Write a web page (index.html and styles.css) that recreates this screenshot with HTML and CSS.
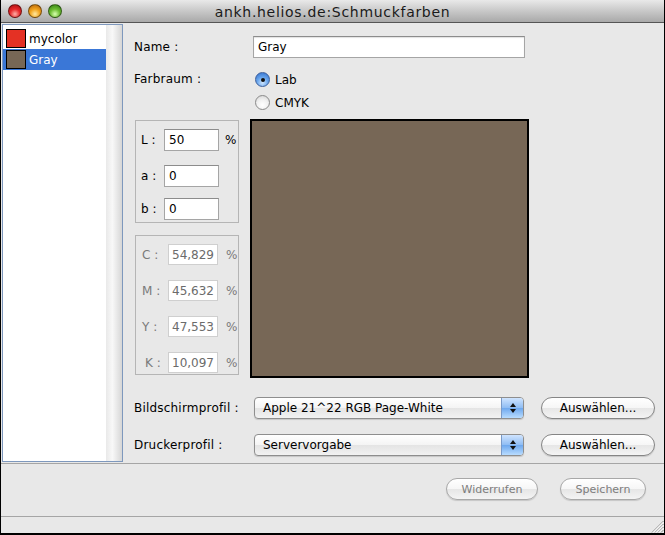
FILE: index.html
```html
<!DOCTYPE html>
<html>
<head>
<meta charset="utf-8">
<link rel="stylesheet" href="styles.css">
</head>
<body>
<div class="window">
  <div class="titlebar">
    <div class="lights">
      <span class="light red"></span>
      <span class="light yellow"></span>
      <span class="light green"></span>
    </div>
    <div class="title">ankh.helios.de:Schmuckfarben</div>
  </div>
  <div class="main">
    <div class="sidebar">
      <div class="list">
        <div class="item"><span class="swatch swatch-red"></span><span>mycolor</span></div>
        <div class="item selected"><span class="swatch swatch-gray"></span><span>Gray</span></div>
      </div>
      <div class="track"></div>
    </div>
    <div class="form">
      <div class="row name-row">
        <div class="label">Name :</div>
        <div class="textfield name-field">Gray</div>
      </div>
      <div class="row space-row">
        <div class="label">Farbraum :</div>
        <div class="radios">
          <div class="radio-line"><span class="radio on"></span>Lab</div>
          <div class="radio-line"><span class="radio"></span>CMYK</div>
        </div>
      </div>
      <div class="middle">
        <div class="boxes">
          <div class="box lab-box">
            <div class="val-row r-l"><span class="vlabel">L :</span><span class="vfield">50</span><span class="pct">%</span></div>
            <div class="val-row r-a"><span class="vlabel">a :</span><span class="vfield">0</span><span class="pct"></span></div>
            <div class="val-row r-b"><span class="vlabel">b :</span><span class="vfield">0</span><span class="pct"></span></div>
          </div>
          <div class="box cmyk-box">
            <div class="cval-row"><span class="clabel">C :</span><span class="cfield">54,829</span><span class="cpct">%</span></div>
            <div class="cval-row"><span class="clabel">M :</span><span class="cfield">45,632</span><span class="cpct">%</span></div>
            <div class="cval-row"><span class="clabel">Y :</span><span class="cfield">47,553</span><span class="cpct">%</span></div>
            <div class="cval-row k-row"><span class="clabel">K :</span><span class="cfield">10,097</span><span class="cpct">%</span></div>
          </div>
        </div>
        <div class="preview"></div>
      </div>
      <div class="row profile-row first">
        <div class="label">Bildschirmprofil :</div>
        <div class="select"><span class="select-text">Apple 21^22 RGB Page-White</span><span class="select-arrows"><i class="up"></i><i class="down"></i></span></div>
        <div class="button">Auswählen...</div>
      </div>
      <div class="row profile-row">
        <div class="label">Druckerprofil :</div>
        <div class="select"><span class="select-text">Servervorgabe</span><span class="select-arrows"><i class="up"></i><i class="down"></i></span></div>
        <div class="button">Auswählen...</div>
      </div>
    </div>
  </div>
  <div class="footer">
    <div class="button disabled undo">Widerrufen</div>
    <div class="button disabled save">Speichern</div>
  </div>
  <div class="statusbar">
    <svg class="grip" width="14" height="14" viewBox="0 0 14 14">
      <g stroke="#8a8a8a" stroke-width="1">
        <line x1="13.5" y1="2" x2="2" y2="13.5"/>
        <line x1="13.5" y1="5" x2="5" y2="13.5"/>
        <line x1="13.5" y1="8" x2="8" y2="13.5"/>
        <line x1="13.5" y1="11" x2="11" y2="13.5"/>
      </g>
      <g stroke="#ffffff" stroke-width="1">
        <line x1="13.5" y1="3" x2="3" y2="13.5"/>
        <line x1="13.5" y1="6" x2="6" y2="13.5"/>
        <line x1="13.5" y1="9" x2="9" y2="13.5"/>
      </g>
    </svg>
  </div>
</div>
</body>
</html>
```

FILE: styles.css
```css
* { box-sizing: border-box; }
html, body { margin: 0; padding: 0; }
body {
  width: 665px;
  height: 535px;
  font-family: "DejaVu Sans", "Liberation Sans", sans-serif;
  font-size: 12px;
  color: #000;
  background: #e8e8e8;
}
.window {
  width: 665px;
  height: 535px;
  border: 1px solid #000;
  border-top: none;
  background: #e8e8e8;
  display: flex;
  flex-direction: column;
}
.titlebar {
  height: 23px;
  flex: none;
  background: linear-gradient(#e9e9e9, #c8c8c8 50%, #a9a9a9);
  border-bottom: 1px solid #555;
  position: relative;
  display: flex;
  align-items: center;
  justify-content: center;
}
.lights {
  position: absolute;
  left: 7px;
  top: 4px;
  display: flex;
  gap: 6px;
}
.light {
  width: 14px;
  height: 14px;
  border-radius: 50%;
  border: 1px solid rgba(0,0,0,0.45);
}
.light.red { background: radial-gradient(circle at 50% 75%, #ffb0a8 0%, #e8292a 45%, #a50d0d 100%); }
.light.yellow { background: radial-gradient(circle at 50% 75%, #ffe9a0 0%, #f2a41d 45%, #b05e06 100%); }
.light.green { background: radial-gradient(circle at 50% 75%, #d8ffb0 0%, #6dbd33 45%, #2f7a10 100%); }
.title {
  font-size: 14px;
  letter-spacing: 0.7px;
  color: #1a1a1a;
  padding-top: 1px;
}
.main {
  height: 440px;
  flex: none;
  display: flex;
}
.sidebar {
  width: 121px;
  margin: 1px 0 1px 1px;
  border: 1px solid #7e98bd;
  background: #fff;
  display: flex;
}
.list {
  flex: 1;
  padding-top: 3px;
}
.track {
  width: 16px;
  background: linear-gradient(90deg, #e9e9e9, #f8f8f8 40%, #d6d6d6);
}
.item {
  height: 21px;
  display: flex;
  align-items: center;
  gap: 3px;
  padding-left: 3px;
  font-size: 12px;
}
.item.selected {
  background: #3a77d7;
  color: #fff;
}
.swatch {
  width: 20px;
  height: 19px;
  border: 1px solid #000;
}
.swatch-red { background: #e43124; }
.swatch-gray { background: #776756; }
.form {
  flex: 1;
  padding-left: 11px;
  padding-top: 13px;
}
.row {
  display: flex;
  align-items: center;
}
.label {
  width: 119px;
  flex: none;
  letter-spacing: 0.2px;
}
.textfield {
  background: #fff;
  border: 1px solid #a5a5a5;
  border-top-color: #8c8c8c;
  box-shadow: inset 0 1px 1px rgba(0,0,0,0.12);
  height: 22px;
  padding: 3px 4px;
}
.name-field { width: 272px; }
.space-row {
  margin-top: 14px;
  align-items: flex-start;
}
.space-row .label { padding-top: 0; }
.radios {
  display: flex;
  flex-direction: column;
  gap: 8px;
  padding-left: 2px;
}
.radio-line {
  display: flex;
  align-items: center;
  gap: 5px;
  height: 15px;
}
.radio {
  width: 15px;
  height: 15px;
  border-radius: 50%;
  border: 1px solid #8a8a8a;
  background: radial-gradient(circle at 50% 70%, #ffffff 0%, #f0f0f0 50%, #d0d0d0 100%);
  position: relative;
}
.radio.on {
  border-color: #3c5f9c;
  background: radial-gradient(circle at 50% 75%, #cfe6ff 0%, #6aa6ec 45%, #2c6ccc 100%);
}
.radio.on::after {
  content: "";
  position: absolute;
  left: 4.5px;
  top: 4.5px;
  width: 4px;
  height: 4px;
  border-radius: 50%;
  background: #111;
}
.middle {
  display: flex;
  margin-top: 9px;
}
.boxes {
  width: 116px;
  flex: none;
  padding-left: 1px;
  padding-top: 1px;
  display: flex;
  flex-direction: column;
  gap: 12px;
}
.box {
  width: 104px;
  border: 1px solid #b5b5b5;
}
.lab-box {
  height: 103px;
  padding-top: 8px;
}
.val-row {
  display: flex;
  align-items: center;
  height: 22px;
}
.r-a { margin-top: 14px; }
.r-b { margin-top: 11px; }
.vlabel {
  width: 28px;
  padding-left: 5px;
}
.vfield {
  width: 55px;
  height: 22px;
  background: #fff;
  border: 1px solid #a5a5a5;
  border-top-color: #8c8c8c;
  padding: 3px 4px;
}
.pct { padding-left: 6px; }
.cmyk-box {
  height: 140px;
  padding-top: 8px;
  color: #7a7a7a;
}
.cval-row {
  display: flex;
  align-items: center;
  height: 21px;
  margin-bottom: 15px;
}
.cval-row.k-row { margin-bottom: 0; }
.clabel {
  width: 32px;
  padding-left: 6px;
}
.k-row .clabel { padding-left: 9px; }
.cfield {
  width: 50px;
  height: 21px;
  background: #fff;
  border: 1px solid #cfcfcf;
  padding: 3px 3px;
  color: #6b6b6b;
}
.cpct { padding-left: 8px; }
.preview {
  width: 279px;
  height: 259px;
  border: 2px solid #000;
  background: #776756;
}
.profile-row .label { width: 120px; }
.profile-row.first { margin-top: 19px; }
.profile-row + .profile-row { margin-top: 15px; }
.select {
  width: 270px;
  height: 22px;
  border: 1px solid #8e8e8e;
  border-radius: 4px;
  background: linear-gradient(#ffffff, #f4f4f4 50%, #e4e4e4 51%, #f2f2f2);
  display: flex;
  overflow: hidden;
  box-shadow: 0 1px 1px rgba(0,0,0,0.15);
}
.select-text {
  flex: 1;
  padding: 3px 0 0 8px;
}
.select-arrows {
  width: 22px;
  background: linear-gradient(#cfe4ff, #8ebcf3 50%, #6ea8ee 51%, #b8dcff);
  border-left: 1px solid #7a9ac8;
  display: flex;
  flex-direction: column;
  align-items: center;
  justify-content: center;
  gap: 2px;
}
.select-arrows i {
  width: 0;
  height: 0;
  border-left: 3px solid transparent;
  border-right: 3px solid transparent;
}
.select-arrows .up { border-bottom: 4px solid #111; }
.select-arrows .down { border-top: 4px solid #111; }
.button {
  height: 22px;
  border: 1px solid #858585;
  border-radius: 11px;
  background: linear-gradient(#ffffff, #f6f6f6 50%, #e6e6e6 51%, #f4f4f4);
  display: flex;
  align-items: center;
  justify-content: center;
  box-shadow: 0 1px 1px rgba(0,0,0,0.15);
}
.profile-row .button {
  width: 114px;
  margin-left: 17px;
}
.footer {
  height: 53px;
  flex: none;
  border-top: 1px solid #a5a5a5;
  display: flex;
  align-items: center;
  justify-content: flex-end;
  padding-right: 18px;
  padding-bottom: 2px;
  gap: 22px;
}
.button.disabled {
  color: #7d7d7d;
  font-size: 11px;
  border-color: #a8a8a8;
}
.undo { width: 92px; }
.save { width: 86px; }
.statusbar {
  flex: 1;
  border-top: 1px solid #a5a5a5;
  border-bottom: 1px solid #000;
  display: flex;
  justify-content: flex-end;
  align-items: flex-end;
}
.grip { display: block; }
```
